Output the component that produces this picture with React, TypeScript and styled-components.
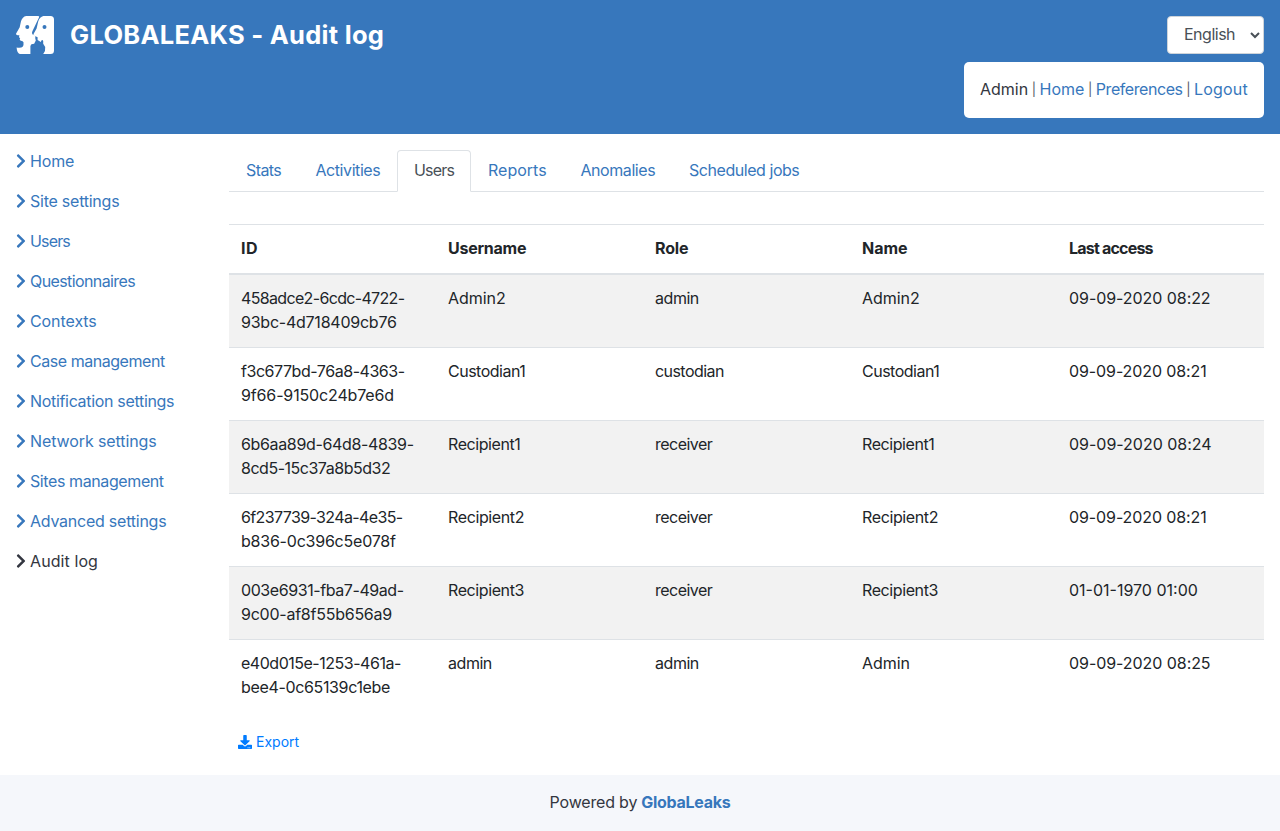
import React from 'react';
import styled, { createGlobalStyle } from 'styled-components';
import { FaChevronRight, FaDownload } from 'react-icons/fa';

const GlobalStyle = createGlobalStyle`
  *, *::before, *::after { box-sizing: border-box; }
  body {
    margin: 0;
    background: #fff;
    color: #212529;
    font: 400 16px/24px Inter, 'Liberation Sans', sans-serif;
  }
`;

const Page = styled.div`
  display: flex;
  flex-direction: column;
  min-height: 831px;
`;

const Header = styled.header`
  display: flex;
  justify-content: space-between;
  align-items: flex-start;
  height: 134px;
  padding: 16px;
  background: #3777bc;
`;

const Brand = styled.div`
  display: flex;
  align-items: center;
  gap: 16px;
  height: 38px;
`;

const Title = styled.h1`
  margin: 0;
  color: #fff;
  font-size: 25.5px;
  font-weight: 700;
  line-height: 38px;
  letter-spacing: 0.28px;
  white-space: nowrap;
`;

const HeaderTools = styled.div`
  display: flex;
  flex-direction: column;
  align-items: flex-end;
  gap: 8px;
`;

const LanguageSelect = styled.select`
  width: 97px;
  height: 38px;
  padding: 5px 12px 7px;
  border: 1px solid #ced4da;
  border-radius: 4px;
  background: #fff;
  color: #495057;
  font: inherit;
  letter-spacing: -0.5px;
`;

const SessionBox = styled.div`
  display: flex;
  justify-content: space-between;
  width: 300px;
  height: 56px;
  padding: 15px 16px;
  border-radius: 5px;
  background: #fff;
  color: #333640;
  white-space: nowrap;
`;

const Text = styled.span<{ $ls?: number }>`
  letter-spacing: ${(p) => p.$ls ?? 0}px;
  white-space: nowrap;
`;

const Divider = styled.span`
  color: #555862;
  font-size: 13px;
`;

const Link = styled.a<{ $ls?: number }>`
  color: #3777bc;
  letter-spacing: ${(p) => p.$ls ?? 0}px;
  text-decoration: none;
  white-space: nowrap;
`;

const Main = styled.main`
  display: grid;
  grid-template-columns: 213px 1fr;
  height: 641px;
`;

const Sidebar = styled.nav`
  display: flex;
  flex-direction: column;
  padding: 7px 0 0 16px;
`;

const SidebarLink = styled.a<{ $active?: boolean; $ls: number }>`
  display: flex;
  align-items: center;
  gap: 4px;
  height: 40px;
  color: ${(p) => (p.$active ? '#333640' : '#3777bc')};
  letter-spacing: ${(p) => p.$ls - 0.04}px;
  text-decoration: none;
  white-space: nowrap;

  svg {
    width: 10px;
    height: 16px;
  }
`;

const Content = styled.section`
  padding: 16px;
`;

const Tabs = styled.div`
  display: flex;
  height: 42px;
  margin-bottom: 32px;
  border-bottom: 1px solid #dee2e6;
`;

const Tab = styled.a<{ $active?: boolean; $ls: number; $width: number }>`
  width: ${(p) => p.$width}px;
  height: 42px;
  padding: 7px 0 8px 16px;
  border: 1px solid transparent;
  border-color: ${(p) => (p.$active ? '#dee2e6 #dee2e6 #fff' : 'transparent')};
  border-radius: 4px 4px 0 0;
  color: ${(p) => (p.$active ? '#495057' : '#3777bc')};
  letter-spacing: ${(p) => p.$ls}px;
  white-space: nowrap;
`;

const Table = styled.table`
  width: 100%;
  margin-bottom: 15px;
  border-collapse: separate;
  border-spacing: 0;
  table-layout: fixed;
`;

const HeadCell = styled.th`
  padding: 11px 12px 13px;
  border-top: 1px solid #dee2e6;
  border-bottom: 2px solid #dee2e6;
  font-weight: 700;
  text-align: left;
`;

const Row = styled.tr`
  &:nth-child(odd) {
    background: #f2f2f2;
  }
`;

const Cell = styled.td`
  padding: 11px 12px 13px;
  border-top: 1px solid #dee2e6;
  vertical-align: top;

  ${Row}:first-child & {
    border-top: 0;
  }
`;

const Line = styled(Text)`
  display: block;
`;

const ExportButton = styled.button`
  display: flex;
  align-items: center;
  gap: 4px;
  height: 29px;
  padding: 3px 8px;
  border: 1px solid transparent;
  background: none;
  color: #007bff;
  font: inherit;
  font-size: 14px;
  line-height: 21px;
  letter-spacing: 0;

  svg {
    width: 14px;
    height: 14px;
  }
`;

const Footer = styled.footer`
  display: flex;
  justify-content: center;
  gap: 4px;
  height: 56px;
  padding: 15px 16px;
  background: #f5f7fb;
  color: #333640;
`;

const FooterLink = styled(Link)`
  font-weight: 700;
`;

type Label = [text: string, spacing: number];

const sections: Label[] = [
  ['Home', -0.1],
  ['Site settings', -0.2],
  ['Users', -0.8],
  ['Questionnaires', -0.56],
  ['Contexts', -0.04],
  ['Case management', -0.42],
  ['Notification settings', -0.28],
  ['Network settings', -0.06],
  ['Sites management', -0.36],
  ['Advanced settings', -0.2],
  ['Audit log', 0.13],
];

const tabs: [text: string, spacing: number, width: number][] = [
  ['Stats', -0.58, 69.5],
  ['Activities', -0.43, 98.5],
  ['Users', -0.8, 74],
  ['Reports', 0, 92.5],
  ['Anomalies', -0.44, 108.5],
  ['Scheduled jobs', -0.45, 144],
];

const columns: Label[] = [
  ['ID', 0.6],
  ['Username', -0.25],
  ['Role', -0.15],
  ['Name', -0.05],
  ['Last access', -0.8],
];

const users: { id: [Label, Label]; cells: Label[] }[] = [
  {
    id: [['458adce2-6cdc-4722-', -0.66], ['93bc-4d718409cb76', -0.24]],
    cells: [['Admin2', -0.05], ['admin', -0.45], ['Admin2', -0.05], ['09-09-2020 08:22', -0.06]],
  },
  {
    id: [['f3c677bd-76a8-4363-', -0.45], ['9f66-9150c24b7e6d', -0.14]],
    cells: [['Custodian1', -0.5], ['custodian', -0.56], ['Custodian1', -0.5], ['09-09-2020 08:21', -0.1]],
  },
  {
    id: [['6b6aa89d-64d8-4839-', -0.35], ['8cd5-15c37a8b5d32', -0.48]],
    cells: [['Recipient1', -0.42], ['receiver', -0.52], ['Recipient1', -0.42], ['09-09-2020 08:24', -0.02]],
  },
  {
    id: [['6f237739-324a-4e35-', -0.62], ['b836-0c396c5e078f', -0.22]],
    cells: [['Recipient2', -0.38], ['receiver', -0.52], ['Recipient2', -0.38], ['09-09-2020 08:21', -0.1]],
  },
  {
    id: [['003e6931-fba7-49ad-', -0.42], ['9c00-af8f55b656a9', -0.24]],
    cells: [['Recipient3', -0.4], ['receiver', -0.52], ['Recipient3', -0.4], ['01-01-1970 01:00', 0]],
  },
  {
    id: [['e40d015e-1253-461a-', -0.48], ['bee4-0c65139c1ebe', -0.35]],
    cells: [['admin', -0.45], ['admin', -0.45], ['Admin', -0.04], ['09-09-2020 08:25', -0.06]],
  },
];

/* Two overlapping profiles, facing left. */
const Logo = () => (
  <svg width="38" height="38" viewBox="0 0 38 38" fill="#fff" aria-hidden="true">
    <path
      fillRule="evenodd"
      d="M10.2 0H22.2Q23.8 0 23 1.5L16.4 15.2Q15.3 17.6 16.6 18.5L19.3 19.8V22.4L19.8 24.6L18.2 27.8L15.4 28.2L14.4 30V38H3.8Q1 37.2.6 31.6Q5.2 32.4 6.9 30.6Q7.8 29 7.5 26.2L6.6 25.2L4.3 24.6L3.6 23.2L4.2 22.2L3 21.3L3.4 19.3Q0 19.2 0 17.7L3.7 11.2L5 5.2Q6.4.8 10.2 0ZM11.3 9A2 2 0 1 0 11.3 13A2 2 0 1 0 11.3 9Z"
    />
    <path
      fillRule="evenodd"
      d="M27.4 0H34.5Q38 0 38 3.5V34.5Q38 38 34.5 38H27.2Q29.8 34.8 29.2 31.1L27.2 27.8V24.9Q26.6 23.6 25.4 24.4L24.8 26L21.6 24L21.6 21.3L17.8 19.5Q16.9 19 17.8 17.6L20.6 12.4L22.2 5.4Q23.8.8 27.4 0ZM28.5 9A2 2 0 1 0 28.5 13A2 2 0 1 0 28.5 9Z"
    />
  </svg>
);

export default function App() {
  return (
    <Page>
      <GlobalStyle />
      <Header>
        <Brand>
          <Logo />
          <Title>GLOBALEAKS - Audit log</Title>
        </Brand>
        <HeaderTools>
          <LanguageSelect defaultValue="en">
            <option value="en">English</option>
          </LanguageSelect>
          <SessionBox>
            <Text>Admin</Text>
            <Divider>|</Divider>
            <Link>Home</Link>
            <Divider>|</Divider>
            <Link $ls={-0.43}>Preferences</Link>
            <Divider>|</Divider>
            <Link $ls={0.2}>Logout</Link>
          </SessionBox>
        </HeaderTools>
      </Header>
      <Main>
        <Sidebar>
          {sections.map(([text, ls]) => (
            <SidebarLink key={text} $ls={ls} $active={text === 'Audit log'}>
              <FaChevronRight />
              {text}
            </SidebarLink>
          ))}
        </Sidebar>
        <Content>
          <Tabs>
            {tabs.map(([text, ls, width]) => (
              <Tab key={text} $ls={ls} $width={width} $active={text === 'Users'}>
                {text}
              </Tab>
            ))}
          </Tabs>
          <Table>
            <thead>
              <tr>
                {columns.map(([text, ls]) => (
                  <HeadCell key={text}>
                    <Line $ls={ls}>{text}</Line>
                  </HeadCell>
                ))}
              </tr>
            </thead>
            <tbody>
              {users.map(({ id, cells }) => (
                <Row key={id[0][0]}>
                  <Cell>
                    {id.map(([text, ls]) => (
                      <Line key={text} $ls={ls}>{text}</Line>
                    ))}
                  </Cell>
                  {cells.map(([text, ls], i) => (
                    <Cell key={i}>
                      <Line $ls={ls}>{text}</Line>
                    </Cell>
                  ))}
                </Row>
              ))}
            </tbody>
          </Table>
          <ExportButton>
            <FaDownload />
            Export
          </ExportButton>
        </Content>
      </Main>
      <Footer>
        <Text $ls={-0.18}>Powered by</Text>
        <FooterLink $ls={-0.28}>GlobaLeaks</FooterLink>
      </Footer>
    </Page>
  );
}
